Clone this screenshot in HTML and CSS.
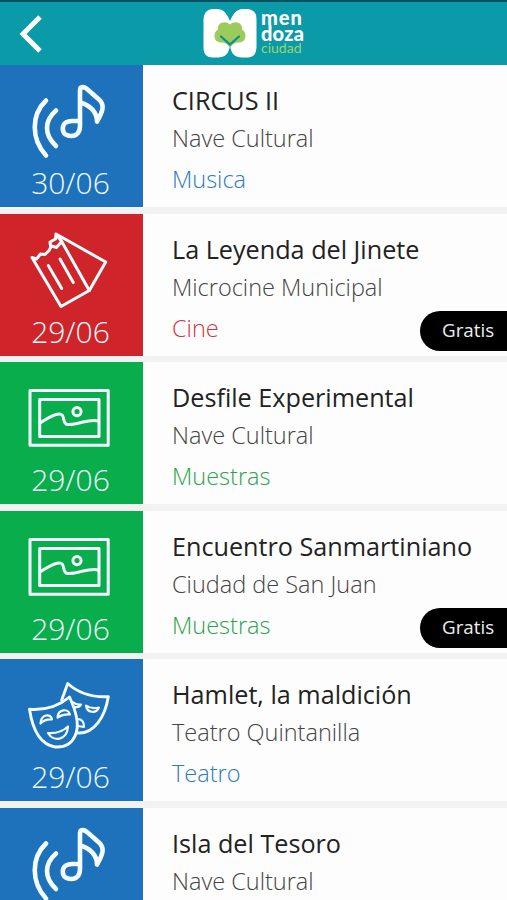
FILE: index.html
```
<!DOCTYPE html>
<html lang="es">
<head>
    <meta charset="UTF-8">
    <meta name="viewport" content="width=device-width, initial-scale=1.0">
    <title>Mendoza Ciudad</title>
    <link rel="stylesheet" href="styles.css">
</head>
<body>
    <!-- Shared icons -->
    <svg class="icon-defs">
        <symbol id="icon-musica" viewBox="0 0 143 100">
            <g stroke-width="4.6">
                <path d="M46 35.5C31 50 31 74 46 90.5"/>
                <path d="M56 45.5C44 56 44 70 56 81"/>
                <path d="M80 56V25.5C80 21 84 21.500 87 24L99 34.500C105 40 103 46 97 56.500C97 47 90 40 80 37.500M80 56H72C66 56 62.500 59 62.800 64C63 69 67 71 71 71C77 71 80 67 80 61Z"/>
            </g>
        </symbol>
        <symbol id="icon-cine" viewBox="0 0 143 100">
            <g stroke-width="3">
                <path d="M32 43.500L36.500 45L40.500 40L45 40.500L49 36.500L51.500 32L56.500 33.500L61.700 27.500L89.300 76.500L61 92.500Z"/>
                <path d="M50.500 32L50 28L55.500 25L56 20L105.700 48L89.300 76.500M56 20L61.700 27.500"/>
                <path d="M48.300 51.500L61.700 74.500M60 45L73.300 68.500"/>
            </g>
        </symbol>
        <symbol id="icon-muestras" viewBox="0 0 143 100">
            <g stroke-width="3">
                <rect x="30" y="28.500" width="78.200" height="54.700"/>
                <rect x="39.700" y="37.500" width="59.300" height="37"/>
                <circle cx="77" cy="49.600" r="4.100"/>
                <path d="M40 61C45 58 52 52.500 59 52C66.500 51.500 61 62.500 68 62.500C79 63 89 56 98.500 59"/>
            </g>
        </symbol>
        <symbol id="icon-teatro" viewBox="0 0 143 100">
            <g stroke-width="2.900">
                <path d="M29.500 50.300Q53 52 69.500 38C76 52 80 67 75 77C71 86 63 88.500 55 88C38 85 32 67 29.500 50.300Z"/>
                <path d="M61.700 41L67.700 24.500Q84 39 108.300 37.700C105 58 94 75 78 74"/>
                <g stroke-width="2.2">
                    <path d="M40.500 64.500C41 55 51 54 52 60.500Q45 60 40.500 64.500Z"/>
                    <path d="M57.500 58.500C58 50 68 49 70 55.500Q63 55 57.500 58.500Z"/>
                    <path d="M48 74Q60 75 68 67.500C67 82 53 83 48 74Z"/>
                    <path d="M86 46.500Q91 50.500 99 48.500C96 55 87 54 86 46.500Z"/>
                    <path d="M73.500 43.500Q76 46 81 45.500Q79 49 75 48M77.500 60Q84 60 84 68L78 67"/>
                </g>
            </g>
        </symbol>
    </svg>

    <header class="header">
        <button class="back-button" aria-label="Volver">
            <svg viewBox="0 0 24 40"><path d="M21 3L4 20L21 37"/></svg>
        </button>
        <div class="logo">
            <svg class="logo-mark" viewBox="0 0 54 49">
                <path class="logo-shape" d="M9 0H14C21 0 24 5 27 12C30 5 33 0 40 0H45Q53.500 1 53.500 10V39Q53 48 45 48.500H39C32 48.500 28.500 45 27 37C25.500 45 22 48.500 15 48.500H9Q.5 48 .5 39V10Q1 1 9 0Z"/>
                <path class="logo-leaf" d="M27 15.500C32 11 40 14 39 20.500C45 24 43 34 36 33.500C32 34 30 34 27 39C24 34 22 34 18 33.500C11 34 9 24 15 20.500C14 14 22 11 27 15.500Z"/>
                <path class="logo-stem" d="M18 27.500L27 35.500L36 27.500"/>
            </svg>
            <div class="logo-text">
                <span class="logo-men">men</span>
                <span class="logo-doza">doza</span>
                <span class="logo-ciudad">ciudad</span>
            </div>
        </div>
    </header>

    <main class="events">
        <article class="event musica">
            <div class="event-tile">
                <svg class="event-icon"><use href="#icon-musica"/></svg>
                <time class="event-date">30/06</time>
            </div>
            <div class="event-info">
                <h2>CIRCUS II</h2>
                <p class="place">Nave Cultural</p>
                <p class="category">Musica</p>
            </div>
        </article>
        <article class="event cine">
            <div class="event-tile">
                <svg class="event-icon"><use href="#icon-cine"/></svg>
                <time class="event-date">29/06</time>
            </div>
            <div class="event-info">
                <h2>La Leyenda del Jinete</h2>
                <p class="place">Microcine Municipal</p>
                <p class="category">Cine</p>
            </div>
            <span class="badge">Gratis</span>
        </article>
        <article class="event muestras">
            <div class="event-tile">
                <svg class="event-icon"><use href="#icon-muestras"/></svg>
                <time class="event-date">29/06</time>
            </div>
            <div class="event-info">
                <h2>Desfile Experimental</h2>
                <p class="place">Nave Cultural</p>
                <p class="category">Muestras</p>
            </div>
        </article>
        <article class="event muestras">
            <div class="event-tile">
                <svg class="event-icon"><use href="#icon-muestras"/></svg>
                <time class="event-date">29/06</time>
            </div>
            <div class="event-info">
                <h2>Encuentro Sanmartiniano</h2>
                <p class="place">Ciudad de San Juan</p>
                <p class="category">Muestras</p>
            </div>
            <span class="badge">Gratis</span>
        </article>
        <article class="event teatro">
            <div class="event-tile">
                <svg class="event-icon"><use href="#icon-teatro"/></svg>
                <time class="event-date">29/06</time>
            </div>
            <div class="event-info">
                <h2>Hamlet, la maldición</h2>
                <p class="place">Teatro Quintanilla</p>
                <p class="category">Teatro</p>
            </div>
        </article>
        <article class="event event-cut musica">
            <div class="event-tile">
                <svg class="event-icon"><use href="#icon-musica"/></svg>
            </div>
            <div class="event-info">
                <h2>Isla del Tesoro</h2>
                <p class="place">Nave Cultural</p>
            </div>
        </article>
    </main>
</body>
</html>
```
FILE: styles.css
```
* {
    box-sizing: border-box;
}
body {
    font-family: "Open Sans", "Noto Sans", sans-serif;
    background-color: #f2f2f2;
    height: 100vh;
    margin: 0;
    overflow: hidden;
    display: flex;
    flex-direction: column;
}
.icon-defs {
    position: absolute;
    width: 0;
    height: 0;
}
/* Header */
.header {
    flex: none;
    height: 65px;
    background-color: #0a9aa8;
    border-top: 2px solid #07505f;
    display: grid;
    grid-template-columns: 203px 1fr;
    align-items: center;
}
.back-button {
    width: 24px;
    height: 40px;
    margin-left: 19px;
    padding: 0;
    border: none;
    background: none;
    cursor: pointer;
}
.back-button svg {
    display: block;
    width: 24px;
    height: 40px;
    fill: none;
    stroke: #fff;
    stroke-width: 5;
}
.logo {
    display: flex;
    gap: 4px;
}
.logo-mark {
    width: 54px;
    height: 49px;
}
.logo-shape {
    fill: #fff;
}
.logo-leaf {
    fill: #9bcb5b;
}
.logo-stem {
    fill: none;
    stroke: #0a8f91;
    stroke-width: 2.2;
    stroke-linecap: round;
}
.logo-text {
    display: flex;
    flex-direction: column;
    color: #fff;
    font-family: Lato, sans-serif;
    font-size: 20px;
    font-weight: 900;
    line-height: 16px;
}
.logo-men {
    letter-spacing: 0.9px;
}
.logo-doza {
    letter-spacing: 0.2px;
}
.logo-ciudad {
    color: #9bd66a;
    font-size: 14px;
    font-weight: 400;
    line-height: 13px;
}
/* Event list */
.events {
    display: flex;
    flex-direction: column;
    gap: 6.5px;
}
.event {
    position: relative;
    flex: none;
    display: flex;
    height: 142px;
    background-color: #fdfdfd;
}
/* Last row is cut by the bottom of the screen */
.event-cut {
    height: 92.5px;
    overflow: hidden;
}
.event-tile {
    width: 143px;
    background-color: #1d72bb;
    color: #f0fbff;
    text-align: center;
}
.event-icon {
    display: block;
    width: 143px;
    height: 100px;
    fill: none;
    stroke: #f4fdff;
    stroke-linecap: round;
    stroke-linejoin: round;
}
.event-date {
    display: block;
    padding-right: 2px;
    font-size: 30px;
    font-weight: 300;
    line-height: 36px;
}
.event-info {
    padding: 18px 0 0 29px;
}
.event-info h2 {
    margin: 0;
    color: #222;
    font-size: 25.2px;
    font-weight: 400;
    line-height: 34px;
}
.event-info p {
    margin: 0;
    font-size: 23.5px;
    font-weight: 300;
}
.place {
    color: #444;
    line-height: 42px;
}
.category {
    color: #2b7cc0;
    line-height: 40px;
}
.cine .event-tile {
    background-color: #cf2429;
}
.cine .category {
    color: #d3343c;
}
.muestras .event-tile {
    background-color: #09ad4b;
}
.muestras .category {
    color: #2aa34a;
}
/* Free entry label over the row edge */
.badge {
    position: absolute;
    right: 0;
    bottom: 4.5px;
    width: 87px;
    height: 40px;
    padding-left: 22px;
    border-radius: 20px 0 0 20px;
    background-color: #000;
    color: #eee;
    font-size: 18.8px;
    line-height: 38px;
}
```
